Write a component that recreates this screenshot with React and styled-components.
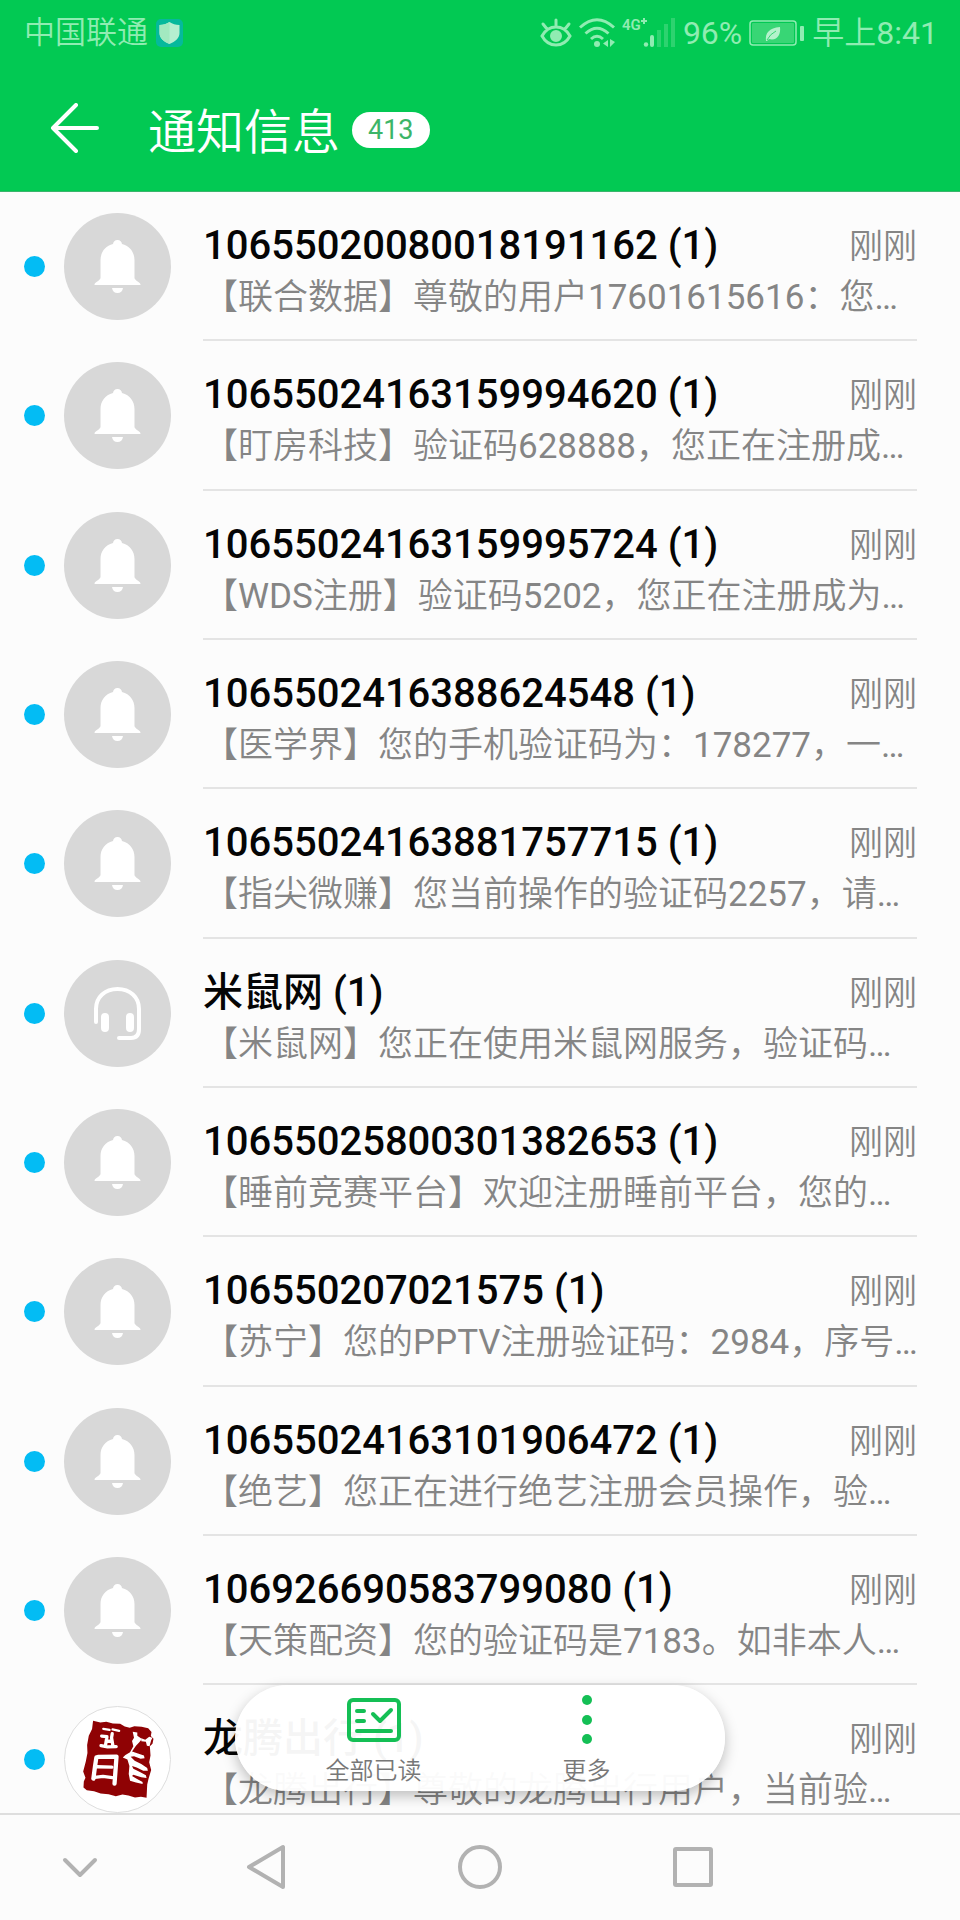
import React from "react";
import styled, { createGlobalStyle } from "styled-components";

const colors = {
  green: "#02c953",
  icon: "#14bf55",
  background: "#fcfcfc",
  status: "#90ecb2",
  unread: "#03bcf4",
  avatar: "#d8d8d8",
  text: "#050505",
  muted: "#858585",
  line: "#dedede",
  nav: "#b2b2b2",
};

const messages = [
  { sender: "10655020080018191162", text: "【联合数据】尊敬的用户17601615616：您…" },
  { sender: "10655024163159994620", text: "【盯房科技】验证码628888，您正在注册成…" },
  { sender: "10655024163159995724", text: "【WDS注册】验证码5202，您正在注册成为…" },
  { sender: "1065502416388624548", text: "【医学界】您的手机验证码为：178277，一…" },
  { sender: "10655024163881757715", text: "【指尖微赚】您当前操作的验证码2257，请…" },
  { sender: "米鼠网", text: "【米鼠网】您正在使用米鼠网服务，验证码…", avatar: "headset" },
  { sender: "10655025800301382653", text: "【睡前竞赛平台】欢迎注册睡前平台，您的…" },
  { sender: "106550207021575", text: "【苏宁】您的PPTV注册验证码：2984，序号…" },
  { sender: "10655024163101906472", text: "【绝艺】您正在进行绝艺注册会员操作，验…" },
  { sender: "106926690583799080", text: "【天策配资】您的验证码是7183。如非本人…" },
  { sender: "龙腾出行", text: "【龙腾出行】尊敬的龙腾出行用户，当前验…", avatar: "seal" },
];

const BellIcon = () => (
  <svg width="107" height="107" viewBox="0 0 107 107" fill="#fff">
    <path d="M53.500 27c2.600 0 4.300 1.700 4.500 4 8 2 12.500 8.500 12.500 16v18c0 2 5.500 4.500 6 6.200.200.500-.200.800-.8.800H31.300c-.6 0-1-.3-.8-.8.500-1.700 6-4.200 6-6.200V47c0-7.500 4.500-14 12.500-16 .2-2.300 1.900-4 4.500-4z" />
    <path d="M48 75h11c-.3 3-2.500 5-5.500 5S48.300 78 48 75z" />
  </svg>
);

const HeadsetIcon = () => (
  <svg width="107" height="107" viewBox="0 0 107 107" fill="none" stroke="#fff" strokeLinecap="round">
    <path strokeWidth="4" d="M32 62V49c0-12 9-20 21.500-20S75 37 75 49v20c0 6-3 9-8 9H55" />
    <path strokeWidth="8" d="M41 57v11M66 57v11" />
  </svg>
);

const SealIcon = () => (
  <svg width="105" height="105" viewBox="43 51 318 318">
    <path
      fill="#8f0204"
      d="M128 93l22 5 18-2 20 5 22 1 14 8 15 4 14-5 22 2 20 4 10 12-2 12 8 8-3 15-8 8 2 28-4 20 6 24-8 26-4 18-2 40-17-3-18 2-20-6-18-3-20 5-22-6-24-2-20-7-22-3-10-8 1-18 5-12-7-19 8-30 5-26-1-24 5-28 10-20z"
    />
    <g fill="none" stroke="#fff" strokeLinecap="round" strokeLinejoin="round">
      <path strokeWidth="7" d="M159 117l19 3m9-1l20 4" />
      <path strokeWidth="10" d="M154 139l16 2-4 24m-14 3l20 4 26-1m-12-39l-2 12 4 24m-18-13l12-1" />
      <path strokeWidth="13" d="M138 204l-4 26-5 38m14-66l56-1-2 28-4 54" />
      <path strokeWidth="10" d="M139 232l46 1M133 264l25-3 28 4" />
    </g>
    <path
      fill="#fff"
      d="M248 126l14 2v10l14 10-8 10-10 10-12 18 18 6 18 6 2 8-12 2-20-8-10 2 12 12 20 10 18 12 2 8h-14l-20-10-14-4 4 8 20 10 18 10 2 8-16-2-24-8-4 4 14 8 18 10v6l-20-4-18-6-4-20 2-24-6-20-14-6 8-8 14-8 10-18-4-16 6-10z"
    />
    <path fill="#fff" d="M274 146l12 4 12-9 10 3-4 8-5 18-8-2-3-12-14-1z" />
  </svg>
);

const avatarIcons = { bell: BellIcon, headset: HeadsetIcon, seal: SealIcon };

const ShieldIcon = () => (
  <svg width="28" height="30" viewBox="0 0 28 30">
    <rect x="0" y="1" width="27" height="28" rx="5" fill="#05b99c" />
    <path d="M13.500 4c3 2 6 3 10 3v8c0 5-4 8.500-10 11-6-2.500-10-6-10-11V7c4 0 7-1 10-3z" fill="#b5efd0" />
    <path d="M13.500 4v22c-6-2.500-10-6-10-11V7c4 0 7-1 10-3z" fill="#a2e9c0" />
  </svg>
);

const EyeIcon = () => (
  <svg width="32" height="30" viewBox="0 0 32 30" fill="none" stroke={colors.status} strokeWidth="3" strokeLinecap="round">
    <path d="M2 18c3-5.500 8-9 14-9s11 3.500 14 9c-3 5.500-8 9-14 9S5 23.500 2 18zM16 2v6M3 6l4 5M29 6l-4 5" />
    <circle cx="16" cy="18" r="4.500" fill={colors.status} />
  </svg>
);

const WifiIcon = () => (
  <svg width="36" height="30" viewBox="0 0 36 30" fill="none" stroke={colors.status} strokeWidth="3">
    <path d="M1 9.500Q18-6 35 9.500M6.500 15.500Q18 5 29.500 15.500M12 21q6-5.500 12 0" />
    <circle cx="18" cy="26" r="3" fill={colors.status} stroke="none" />
    <path d="M29 22v7l-5-3.500zM31 21v8l5-5z" fill={colors.status} stroke="none" />
  </svg>
);

const SignalIcon = () => (
  <svg width="54" height="36" viewBox="0 0 54 36" fill={colors.status}>
    <text x="0" y="15" fontSize="15" fontWeight="600" fontFamily="Roboto, sans-serif">
      4G
    </text>
    <path d="M19 6h6M22 3v6" stroke={colors.status} strokeWidth="2" />
    <circle cx="24" cy="29.500" r="2.200" />
    <rect x="28" y="20" width="4" height="12" rx="2" />
    <g opacity="0.3">
      <rect x="35" y="15" width="4" height="17" />
      <rect x="42" y="9" width="4" height="23" />
      <rect x="49" y="3" width="4" height="29" />
    </g>
  </svg>
);

const BatteryIcon = () => (
  <svg width="56" height="28" viewBox="0 0 56 28">
    <rect x="1" y="2" width="46" height="24" rx="3" fill="none" stroke={colors.status} strokeWidth="1.500" />
    <rect x="3" y="4" width="42" height="20" rx="1" fill="#38d675" />
    <rect x="51" y="7" width="4" height="15" rx="1" fill={colors.status} />
    <path d="M17 22c-1-8 3-13 14-14 1 8-3 14-11 12l-2 2z" fill="#b5f2cc" />
    <path d="M18 21q3-6 9-9" stroke="#38d675" fill="none" />
  </svg>
);

const BackIcon = () => (
  <svg width="50" height="50" viewBox="0 0 50 50" fill="none" stroke="#fff" strokeWidth="4" strokeLinecap="round" strokeLinejoin="round">
    <path d="M26 2L3 25l23 23M3 25h44" />
  </svg>
);

const ReadAllIcon = () => (
  <svg width="54" height="44" viewBox="0 0 54 44" fill="none" stroke={colors.icon} strokeWidth="4" strokeLinecap="round" strokeLinejoin="round">
    <rect x="2" y="2" width="50" height="40" rx="4" />
    <path d="M10 13h7M10 23h7M10 33h34M26 16l7 7 11-11" />
  </svg>
);

const MoreIcon = () => (
  <svg width="54" height="50" viewBox="0 0 54 50" fill={colors.icon}>
    <circle cx="27" cy="5" r="5" />
    <circle cx="27" cy="25" r="5" />
    <circle cx="27" cy="44" r="5" />
  </svg>
);

const NavIcon = ({ children }) => (
  <svg width="48" height="48" viewBox="0 0 48 48" fill="none" stroke={colors.nav} strokeWidth="4" strokeLinecap="round" strokeLinejoin="round">
    {children}
  </svg>
);

const Message = ({ sender, text, avatar = "bell" }) => {
  const Icon = avatarIcons[avatar];
  return (
    <Row>
      <Unread />
      <Avatar $plain={avatar === "seal"}>
        <Icon />
      </Avatar>
      <Body>
        <Heading>
          <Sender>{sender} (1)</Sender>
          <Time>刚刚</Time>
        </Heading>
        <Preview>{text}</Preview>
      </Body>
    </Row>
  );
};

const App = () => {
  return (
    <Screen>
      <GlobalStyle />
      <Header>
        <StatusBar>
          <Carrier>中国联通</Carrier>
          <ShieldIcon />
          <StatusIcons>
            <EyeIcon />
            <WifiIcon />
            <SignalIcon />
            <span>96%</span>
            <BatteryIcon />
            <span>早上8:41</span>
          </StatusIcons>
        </StatusBar>
        <TitleBar>
          <IconButton aria-label="返回">
            <BackIcon />
          </IconButton>
          <Title>通知信息</Title>
          <Badge>413</Badge>
        </TitleBar>
      </Header>
      <Content>
        <List>
          {messages.map((message) => (
            <Message key={message.sender} {...message} />
          ))}
        </List>
        <FloatingBar>
          <Action>
            <ActionIcon>
              <ReadAllIcon />
            </ActionIcon>
            全部已读
          </Action>
          <Action>
            <ActionIcon>
              <MoreIcon />
            </ActionIcon>
            更多
          </Action>
        </FloatingBar>
      </Content>
      <Nav>
        <IconButton aria-label="收起">
          <NavIcon>
            <path d="M9 17l15 15 15-15" />
          </NavIcon>
        </IconButton>
        <IconButton aria-label="后退">
          <NavIcon>
            <path d="M40 4v40L6 24z" />
          </NavIcon>
        </IconButton>
        <IconButton aria-label="主页">
          <NavIcon>
            <circle cx="24" cy="24" r="20" />
          </NavIcon>
        </IconButton>
        <IconButton aria-label="任务">
          <NavIcon>
            <rect x="6" y="6" width="36" height="36" rx="1" />
          </NavIcon>
        </IconButton>
      </Nav>
    </Screen>
  );
};

const GlobalStyle = createGlobalStyle`
  * {
    box-sizing: border-box;
  }
  body {
    margin: 0;
    background-color: ${colors.background};
    font-family: Roboto, "Noto Sans CJK SC DemiLight", "Noto Sans CJK SC", sans-serif;
  }
  svg {
    display: block;
    flex-shrink: 0;
  }
  button {
    font-family: inherit;
    cursor: pointer;
  }
`;

const Screen = styled.div`
  height: 100vh;
  display: flex;
  flex-direction: column;
`;

const Header = styled.header`
  background-color: ${colors.green};
  border-bottom: 1px solid #3bb56c;
`;

const StatusBar = styled.div`
  height: 64px;
  padding: 2px 22px 0 24px;
  display: flex;
  align-items: center;
  gap: 8px;
  color: ${colors.status};
  font-size: 32px;
  line-height: 40px;
`;

const Carrier = styled.span`
  font-size: 31px;
`;

const StatusIcons = styled.div`
  margin-left: auto;
  display: flex;
  align-items: center;
  gap: 7px;
`;

const TitleBar = styled.div`
  height: 127px;
  padding: 0 50px;
  display: flex;
  align-items: center;
`;

const IconButton = styled.button`
  padding: 0;
  border: none;
  background: none;
  display: flex;
  align-items: center;
  justify-content: center;
`;

const Title = styled.h1`
  margin: 0 12px 0 48px;
  color: #fff;
  font-size: 48px;
  font-weight: 350;
`;

const Badge = styled.span`
  margin-top: 4px;
  padding: 0 16px;
  border-radius: 18px;
  background-color: #fff;
  color: #3cb568;
  font-size: 27px;
  line-height: 36px;
`;

const Content = styled.main`
  position: relative;
  flex: 1;
  min-height: 0;
`;

const List = styled.ul`
  height: 100%;
  margin: 0;
  padding: 0;
  list-style: none;
  overflow-y: auto;
  scrollbar-width: none;
`;

const Row = styled.li`
  aspect-ratio: 45 / 7;
  padding: 0 43px 0 24px;
  display: flex;
  align-items: center;
`;

const Unread = styled.span`
  width: 21px;
  height: 21px;
  flex-shrink: 0;
  border-radius: 50%;
  background-color: ${colors.unread};
`;

const Avatar = styled.div`
  width: 107px;
  height: 107px;
  margin: 0 32px 0 19px;
  flex-shrink: 0;
  overflow: hidden;
  border-radius: 50%;
  border: ${({ $plain }) => ($plain ? `1px solid ${colors.line}` : "none")};
  background-color: ${({ $plain }) => ($plain ? "#fff" : colors.avatar)};
`;

const Body = styled.div`
  flex: 1;
  min-width: 0;
  align-self: stretch;
  padding-top: 28px;
  border-bottom: 2px solid #e4e4e4;
`;

const Heading = styled.div`
  display: flex;
  justify-content: space-between;
  line-height: 52px;
`;

const Sender = styled.span`
  color: ${colors.text};
  font-family: Roboto, "Noto Sans CJK SC", sans-serif;
  font-size: 40px;
  font-weight: 500;
`;

const Time = styled.time`
  color: ${colors.muted};
  font-size: 34px;
  font-weight: 350;
`;

const Preview = styled.p`
  margin: 0;
  color: ${colors.muted};
  font-size: 35px;
  line-height: 52px;
  white-space: nowrap;
`;

/* stays over the list while it scrolls */
const FloatingBar = styled.div`
  position: absolute;
  left: 50%;
  bottom: 22px;
  transform: translateX(-50%);
  height: 106px;
  padding: 0 32px;
  display: flex;
  border-radius: 53px;
  background-color: rgba(255, 255, 255, 0.96);
  box-shadow: 0 5px 14px rgba(0, 0, 0, 0.25);
`;

const Action = styled.button`
  width: 213px;
  padding: 8px 0 0;
  border: none;
  background: none;
  display: flex;
  flex-direction: column;
  align-items: center;
  gap: 6px;
  color: #777;
  font-size: 24px;
  font-weight: 350;
  line-height: 36px;
`;

const ActionIcon = styled.span`
  height: 54px;
  display: flex;
  align-items: center;
`;

const Nav = styled.nav`
  height: 107px;
  padding-bottom: 2px;
  border-top: 2px solid ${colors.line};
  display: grid;
  grid-template-columns: 3fr 4fr 4fr 4fr 3fr;
`;

export default App;
